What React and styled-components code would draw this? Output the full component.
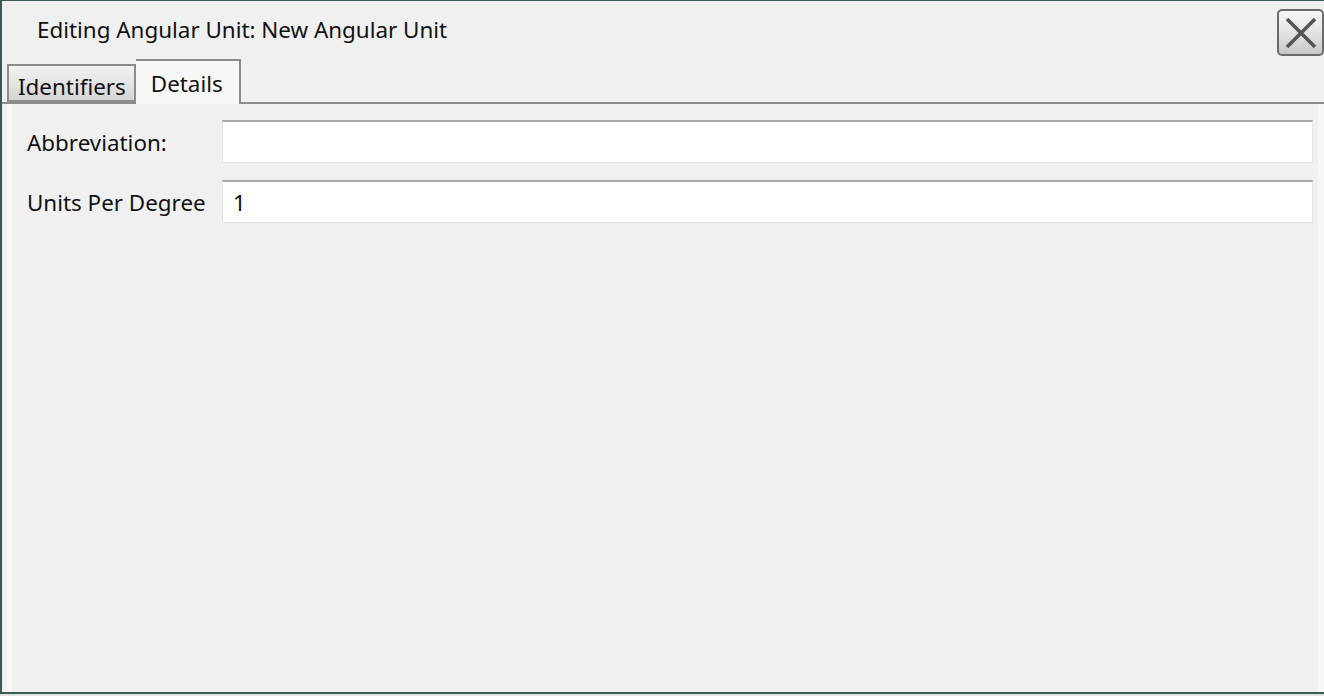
import React from "react";
import styled, { createGlobalStyle } from "styled-components";

const Global = createGlobalStyle`
  html, body { margin: 0; padding: 0; background: #dfe5e3; }
  body { font-family: "Noto Sans", "Open Sans", sans-serif; }
  * { box-sizing: border-box; }
`;

const Window = styled.div`
  width: 1324px;
  height: 694px;
  background: #f0f0f0;
  border-top: 1px solid #3d5656;
  border-left: 2px solid #3d5656;
  border-bottom: 2px solid #3d5656;
  display: flex;
  flex-direction: column;
  color: #111;
`;

const TitleBar = styled.div`
  height: 58px;
  display: flex;
  align-items: center;
  justify-content: space-between;
  padding: 0 0 0 35px;
`;

const Title = styled.div`
  font-size: 22.4px;
  margin-top: -2px;
`;

const CloseButton = styled.button`
  width: 47px;
  height: 47px;
  margin-top: 5px;
  border: 2px solid #6b6b6b;
  border-radius: 5px;
  background: linear-gradient(#f7f7f7, #e6e6e6 45%, #c9c9c9);
  display: flex;
  align-items: center;
  justify-content: center;
  padding: 0;
`;

const TabStrip = styled.div`
  display: flex;
  align-items: flex-end;
  height: 45px;
  padding-left: 5px;
  border-bottom: 2px solid #8c8c8c;
`;

const Tab = styled.div`
  height: ${(p) => (p.$active ? "45px" : "38px")};
  margin-bottom: ${(p) => (p.$active ? "-2px" : "0")};
  padding: ${(p) => (p.$active ? "7px 16px 0 15px" : "5px 8px 0 9px")};
  font-size: 22.4px;
  border: 2px solid #8c8c8c;
  border-bottom: ${(p) => (p.$active ? "none" : "2px solid #8c8c8c")};
  border-left: ${(p) => (p.$active ? "none" : "2px solid #8c8c8c")};
  background: ${(p) =>
    p.$active ? "#f8f8f8" : "linear-gradient(#f2f2f2, #e4e4e4 50%, #d4d4d4)"};
  white-space: nowrap;
`;

const Panel = styled.div`
  flex: 1;
  margin-left: 5px;
  border-left: 5px solid #f8f8f8;
  border-right: 6px solid #f7f7f7;
  padding: 16px 5px 0 15px;
  display: grid;
  grid-template-columns: 195px 1fr;
  grid-auto-rows: 43px;
  row-gap: 17px;
  align-content: start;
`;

const Label = styled.label`
  font-size: 22.4px;
  display: flex;
  align-items: center;
  padding-top: 1px;
`;

const Field = styled.div`
  background: #fff;
  border: 1px solid #e2e4e8;
  border-top: 2px solid #a9a9a9;
  font-size: 22.4px;
  display: flex;
  align-items: center;
  padding-left: 10px;
`;

export default function App() {
  return (
    <>
      <Global />
      <Window>
        <TitleBar>
          <Title>Editing Angular Unit: New Angular Unit</Title>
          <CloseButton aria-label="Close">
            <svg width="34" height="34" viewBox="0 0 34 34">
              <path d="M3 3 L31 31 M31 3 L3 31" stroke="#555" strokeWidth="3.6" strokeLinecap="butt" />
            </svg>
          </CloseButton>
        </TitleBar>
        <TabStrip>
          <Tab>Identifiers</Tab>
          <Tab $active>Details</Tab>
        </TabStrip>
        <Panel>
          <Label>Abbreviation:</Label>
          <Field />
          <Label>Units Per Degree</Label>
          <Field>1</Field>
        </Panel>
      </Window>
    </>
  );
}
